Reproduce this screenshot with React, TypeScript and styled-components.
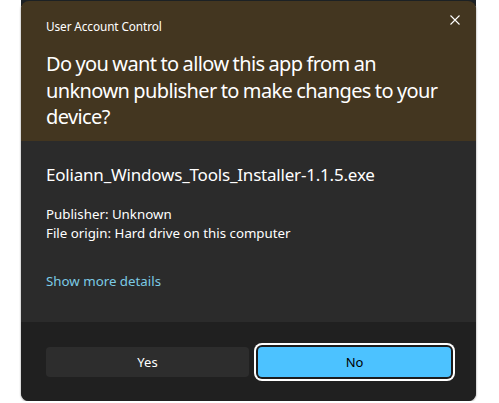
import * as React from 'react';
import styled, { createGlobalStyle } from 'styled-components';

const GlobalStyle = createGlobalStyle`
  html, body {
    margin: 0;
    padding: 0;
    background: #ffffff;
  }
  body {
    font-family: 'Noto Sans', 'Open Sans', sans-serif;
    -webkit-font-smoothing: antialiased;
  }
`;

const Stage = styled.div`
  width: 455px;
  margin-left: 21px;
  padding-top: 1px;
  background: linear-gradient(#1d2226 0 6px, transparent 6px);
`;

const Dialog = styled.div`
  position: relative;
  width: 455px;
  height: 400px;
  border-radius: 8px;
  overflow: hidden;
  display: flex;
  flex-direction: column;
  background: #202020;
  box-shadow: 0 1px 2px rgba(0, 0, 0, 0.5);
`;

const Header = styled.div`
  height: 140px;
  box-sizing: border-box;
  padding: 16px 25px 0;
  background: #433620;
  color: #ffffff;
`;

const Caption = styled.div`
  font-size: 11.8px;
  line-height: 18px;
  letter-spacing: -0.1px;
`;

const Question = styled.h1`
  margin: 16px 0 0;
  font-size: 20px;
  font-weight: 400;
  line-height: 26.5px;
  letter-spacing: -0.6px;
  word-spacing: -0.6px;
`;

const CloseButton = styled.button`
  position: absolute;
  top: 10px;
  right: 10px;
  width: 22px;
  height: 18px;
  padding: 0;
  border: 0;
  background: transparent;
  display: flex;
  align-items: center;
  justify-content: center;
  & svg {
    width: 10px;
    height: 10px;
  }
`;

const Body = styled.div`
  height: 181px;
  box-sizing: border-box;
  padding: 22px 25px 0;
  background: #2b2b2b;
  color: #ffffff;
`;

const FileName = styled.div`
  font-size: 17px;
  line-height: 24px;
  letter-spacing: -0.2px;
`;

const Details = styled.div`
  margin-top: 18px;
  font-size: 13.3px;
  line-height: 19px;
`;

const MoreLink = styled.a`
  display: inline-block;
  margin-top: 29px;
  font-size: 13.3px;
  line-height: 19px;
  color: #7ccae4;
  text-decoration: none;
  cursor: pointer;
`;

const Footer = styled.div`
  flex: 1;
  display: grid;
  grid-template-columns: 203px 193px;
  column-gap: 9px;
  align-items: start;
  padding: 25px 25px 0;
  background: #202020;
`;

const Button = styled.button<{ $primary?: boolean }>`
  position: relative;
  height: 30px;
  border: 0;
  border-radius: 4px;
  font-family: inherit;
  font-size: 13px;
  color: ${(p) => (p.$primary ? '#000000' : '#ffffff')};
  background: ${(p) => (p.$primary ? '#4cc2ff' : '#2d2d2d')};
  box-shadow: ${(p) => (p.$primary ? '0 0 0 2px #1c1c1c, 0 0 0 4px #ffffff' : 'none')};
  cursor: pointer;
`;

export default function App() {
  return (
    <>
      <GlobalStyle />
      <Stage>
        <Dialog>
          <Header>
            <Caption>User Account Control</Caption>
            <Question>
              Do you want to allow this app from an unknown publisher to make changes to your device?
            </Question>
          </Header>
          <CloseButton aria-label="Close">
            <svg viewBox="0 0 10 10" fill="none" stroke="#ffffff" strokeWidth="1.1">
              <path d="M0.5 0.5 L9.5 9.5 M9.5 0.5 L0.5 9.5" />
            </svg>
          </CloseButton>
          <Body>
            <FileName>Eoliann_Windows_Tools_Installer-1.1.5.exe</FileName>
            <Details>
              <div>Publisher: Unknown</div>
              <div>File origin: Hard drive on this computer</div>
            </Details>
            <MoreLink>Show more details</MoreLink>
          </Body>
          <Footer>
            <Button>Yes</Button>
            <Button $primary>No</Button>
          </Footer>
        </Dialog>
      </Stage>
    </>
  );
}
